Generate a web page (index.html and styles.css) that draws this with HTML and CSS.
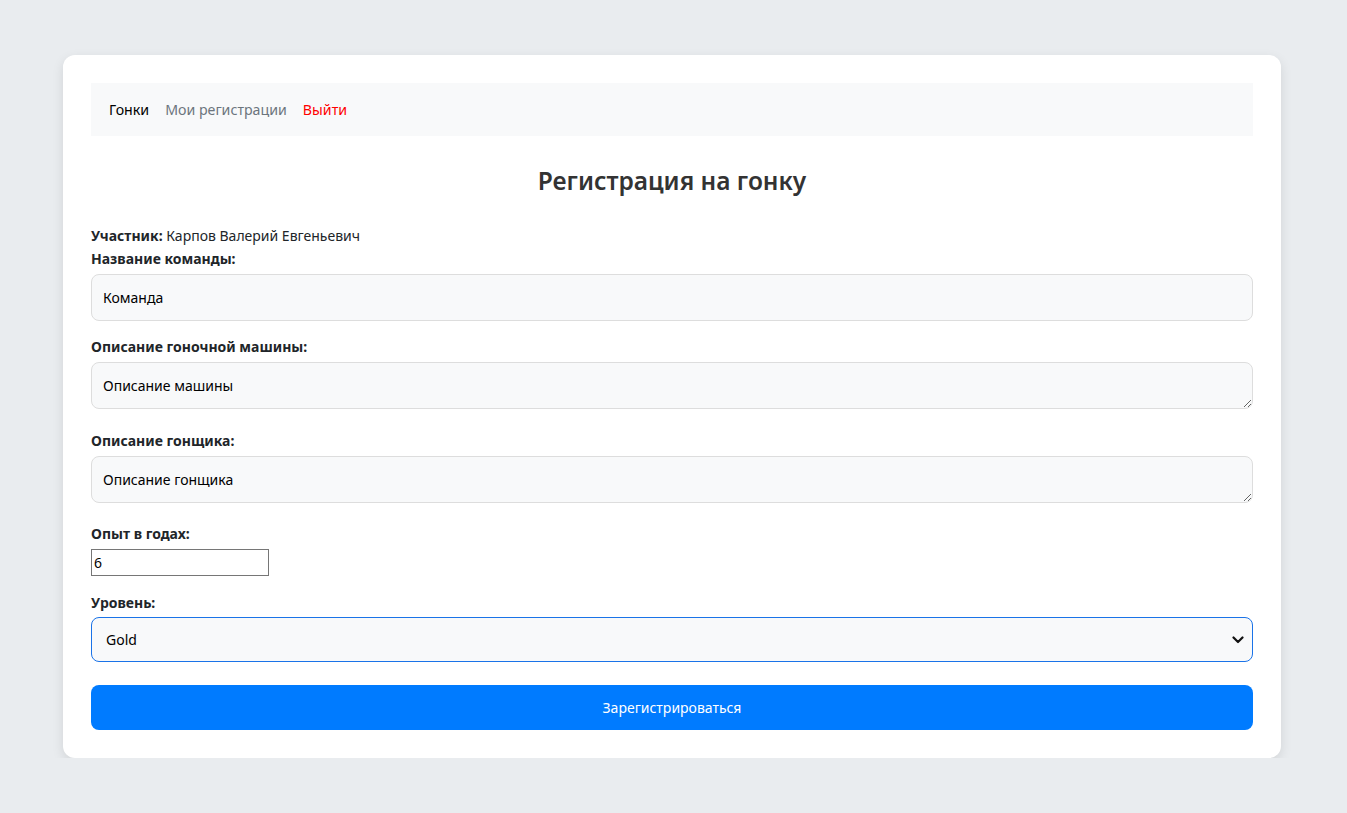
FILE: index.html
```html
<!DOCTYPE html>
<html lang="ru">
<head>
<meta charset="utf-8">
<title>Регистрация на гонку</title>
<link rel="stylesheet" href="styles.css">
</head>
<body>
<div class="card">
  <nav class="nav">
    <a class="nav-link active" href="#">Гонки</a>
    <a class="nav-link" href="#">Мои регистрации</a>
    <a class="nav-link logout" href="#">Выйти</a>
  </nav>
  <h1 class="title">Регистрация на гонку</h1>
  <form class="form">
    <p class="participant"><b>Участник:</b> Карпов Валерий Евгеньевич</p>
    <label class="label">Название команды:</label>
    <input class="field" type="text" value="Команда">
    <label class="label gap">Описание гоночной машины:</label>
    <textarea class="field area">Описание машины</textarea>
    <label class="label gap2 first">Описание гонщика:</label>
    <textarea class="field area">Описание гонщика</textarea>
    <label class="label gap2">Опыт в годах:</label>
    <input class="number" type="text" value="6">
    <label class="label gap3">Уровень:</label>
    <div class="select">
      <span>Gold</span>
      <svg width="12" height="8" viewBox="0 0 12 8"><path d="M1.5 1.5 L6 6 L10.5 1.5" fill="none" stroke="#111" stroke-width="2.2" stroke-linecap="round" stroke-linejoin="round"/></svg>
    </div>
    <button class="btn" type="button">Зарегистрироваться</button>
  </form>
</div>
</body>
</html>
```
FILE: styles.css
```css
* { box-sizing: border-box; }
body {
  margin: 0;
  background: #e9ecef;
  font-family: "Noto Sans", "Open Sans", sans-serif;
  color: #212529;
  font-size: 14px;
}
.card {
  margin: 55px 66px 0 63px;
  background: #fff;
  border-radius: 12px;
  padding: 28px;
  box-shadow: 0 4px 12px rgba(0,0,0,0.1);
}
.nav {
  background: #f8f9fa;
  height: 53px;
  display: flex;
  align-items: center;
  padding: 0 18px;
  gap: 16px;
}
.nav-link {
  text-decoration: none;
  color: #6c757d;
  font-size: 14.2px;
}
.nav-link.active { color: #000; }
.nav-link.logout { color: #ff0000; }
.title {
  text-align: center;
  font-size: 24.5px;
  font-weight: 600;
  color: #333;
  margin: 27px 0 0;
  line-height: 36px;
}
.form { display: flex; flex-direction: column; }
.participant {
  margin: 26px 0 0;
  line-height: 22px;
}
.participant b { font-weight: 700; }
.label {
  display: block;
  font-weight: 700;
  line-height: 22px;
  margin: 1px 0 4px;
}
.label.gap { margin-top: 15px; }
.label.gap2 { margin-top: 20px; }
.label.gap2.first { margin-top: 21px; }
.label.gap3 { margin-top: 16px; margin-bottom: 3px; }
.field {
  width: 100%;
  height: 47px;
  background: #f8f9fa;
  border: 1px solid #ddd;
  border-radius: 8px;
  padding: 12px 11px;
  font-family: inherit;
  font-size: 14px;
  color: #000;
  line-height: 21px;
}
.area { resize: vertical; display: block; }
.number {
  width: 178px;
  height: 27px;
  border: 1px solid #767676;
  padding: 1px 2px;
  font-family: inherit;
  font-size: 14px;
  color: #000;
  border-radius: 0;
}
.select {
  height: 45px;
  border: 1px solid #1a73e8;
  border-radius: 8px;
  background: #f8f9fa;
  display: flex;
  align-items: center;
  justify-content: space-between;
  padding: 0 8px 0 14px;
  color: #000;
  font-size: 14px;
}
.btn {
  margin-top: 23px;
  height: 45px;
  background: #007bff;
  color: #fff;
  border: none;
  border-radius: 8px;
  font-family: inherit;
  font-size: 14px;
}
```
